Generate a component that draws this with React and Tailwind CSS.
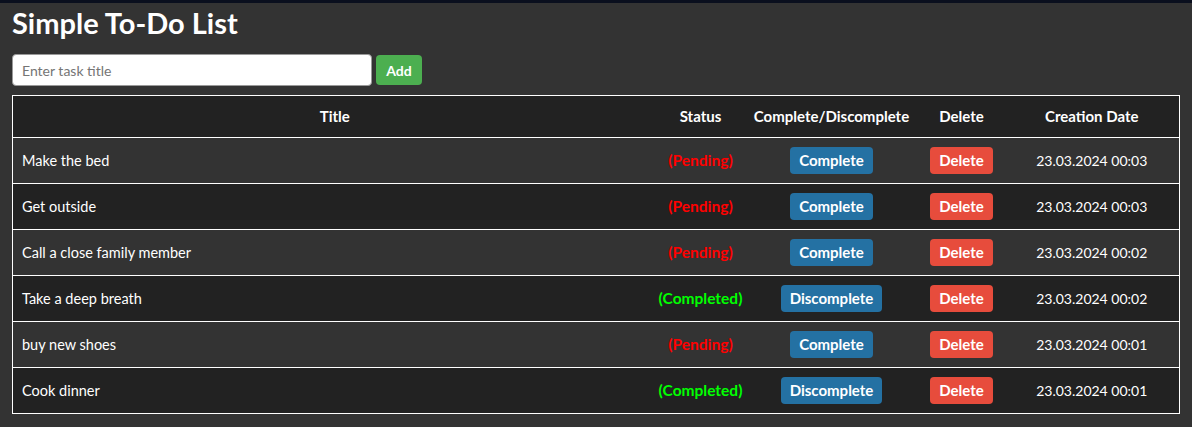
import React, { useState } from 'react';

const initialTasks = [
  { title: 'Make the bed', done: false, date: '23.03.2024 00:03' },
  { title: 'Get outside', done: false, date: '23.03.2024 00:03' },
  { title: 'Call a close family member', done: false, date: '23.03.2024 00:02' },
  { title: 'Take a deep breath', done: true, date: '23.03.2024 00:02' },
  { title: 'buy new shoes', done: false, date: '23.03.2024 00:01' },
  { title: 'Cook dinner', done: true, date: '23.03.2024 00:01' },
];

export default function App() {
  const [tasks, setTasks] = useState(initialTasks);
  const [title, setTitle] = useState('');

  const toggle = (i) => {
    setTasks(tasks.map((t, j) => (j === i ? { ...t, done: !t.done } : t)));
  };

  const remove = (i) => {
    setTasks(tasks.filter((_, j) => j !== i));
  };

  const add = () => {
    if (!title.trim()) return;
    setTasks([{ title, done: false, date: '23.03.2024 00:04' }, ...tasks]);
    setTitle('');
  };

  return (
    <div className="min-h-[427px] bg-[#333333] border-t-[3px] border-[#0a0f1e] px-3 font-['Lato',sans-serif] text-white">
      <h1 className="text-[29px] leading-[36px] font-bold pt-[2px]">Simple To-Do List</h1>

      <div className="flex items-center gap-1 mt-[13px]">
        <input
          type="text"
          value={title}
          onChange={(e) => setTitle(e.target.value)}
          placeholder="Enter task title"
          className="w-[360px] h-8 bg-white rounded border border-[#999] px-[9px] text-[14px] text-black placeholder:text-[#757575] outline-none"
        />
        <button
          onClick={add}
          className="h-[30px] w-[46px] bg-[#4caf50] rounded text-[14px] font-bold text-white"
        >
          Add
        </button>
      </div>

      <table className="w-full mt-[9px] border border-white border-collapse text-[14.5px]">
        <thead>
          <tr className="bg-[#222222] h-[42px] text-[15px]">
            <th className="font-bold">Title</th>
            <th className="w-[88px] font-bold">Status</th>
            <th className="w-[174px] font-bold">Complete/Discomplete</th>
            <th className="w-[86px] font-bold">Delete</th>
            <th className="w-[175px] font-bold">Creation Date</th>
          </tr>
        </thead>
        <tbody>
          {tasks.map((t, i) => (
            <tr key={i} className={`h-[46px] border-t border-white ${i % 2 === 0 ? 'bg-[#333333]' : 'bg-[#222222]'}`}>
              <td className="pl-[9px]">{t.title}</td>
              <td className={`text-center font-bold text-[15.5px] ${t.done ? 'text-[#00ff00]' : 'text-[#ff0000]'}`}>
                {t.done ? '(Completed)' : '(Pending)'}
              </td>
              <td className="text-center">
                <button
                  onClick={() => toggle(i)}
                  className="h-[27px] px-[9px] bg-[#2471a3] rounded font-bold text-[15px] text-white"
                >
                  {t.done ? 'Discomplete' : 'Complete'}
                </button>
              </td>
              <td className="text-center">
                <button
                  onClick={() => remove(i)}
                  className="h-[27px] px-[9px] bg-[#e74c3c] rounded font-bold text-[15px] text-white"
                >
                  Delete
                </button>
              </td>
              <td className="text-center text-[14px]">{t.date}</td>
            </tr>
          ))}
        </tbody>
      </table>
    </div>
  );
}
